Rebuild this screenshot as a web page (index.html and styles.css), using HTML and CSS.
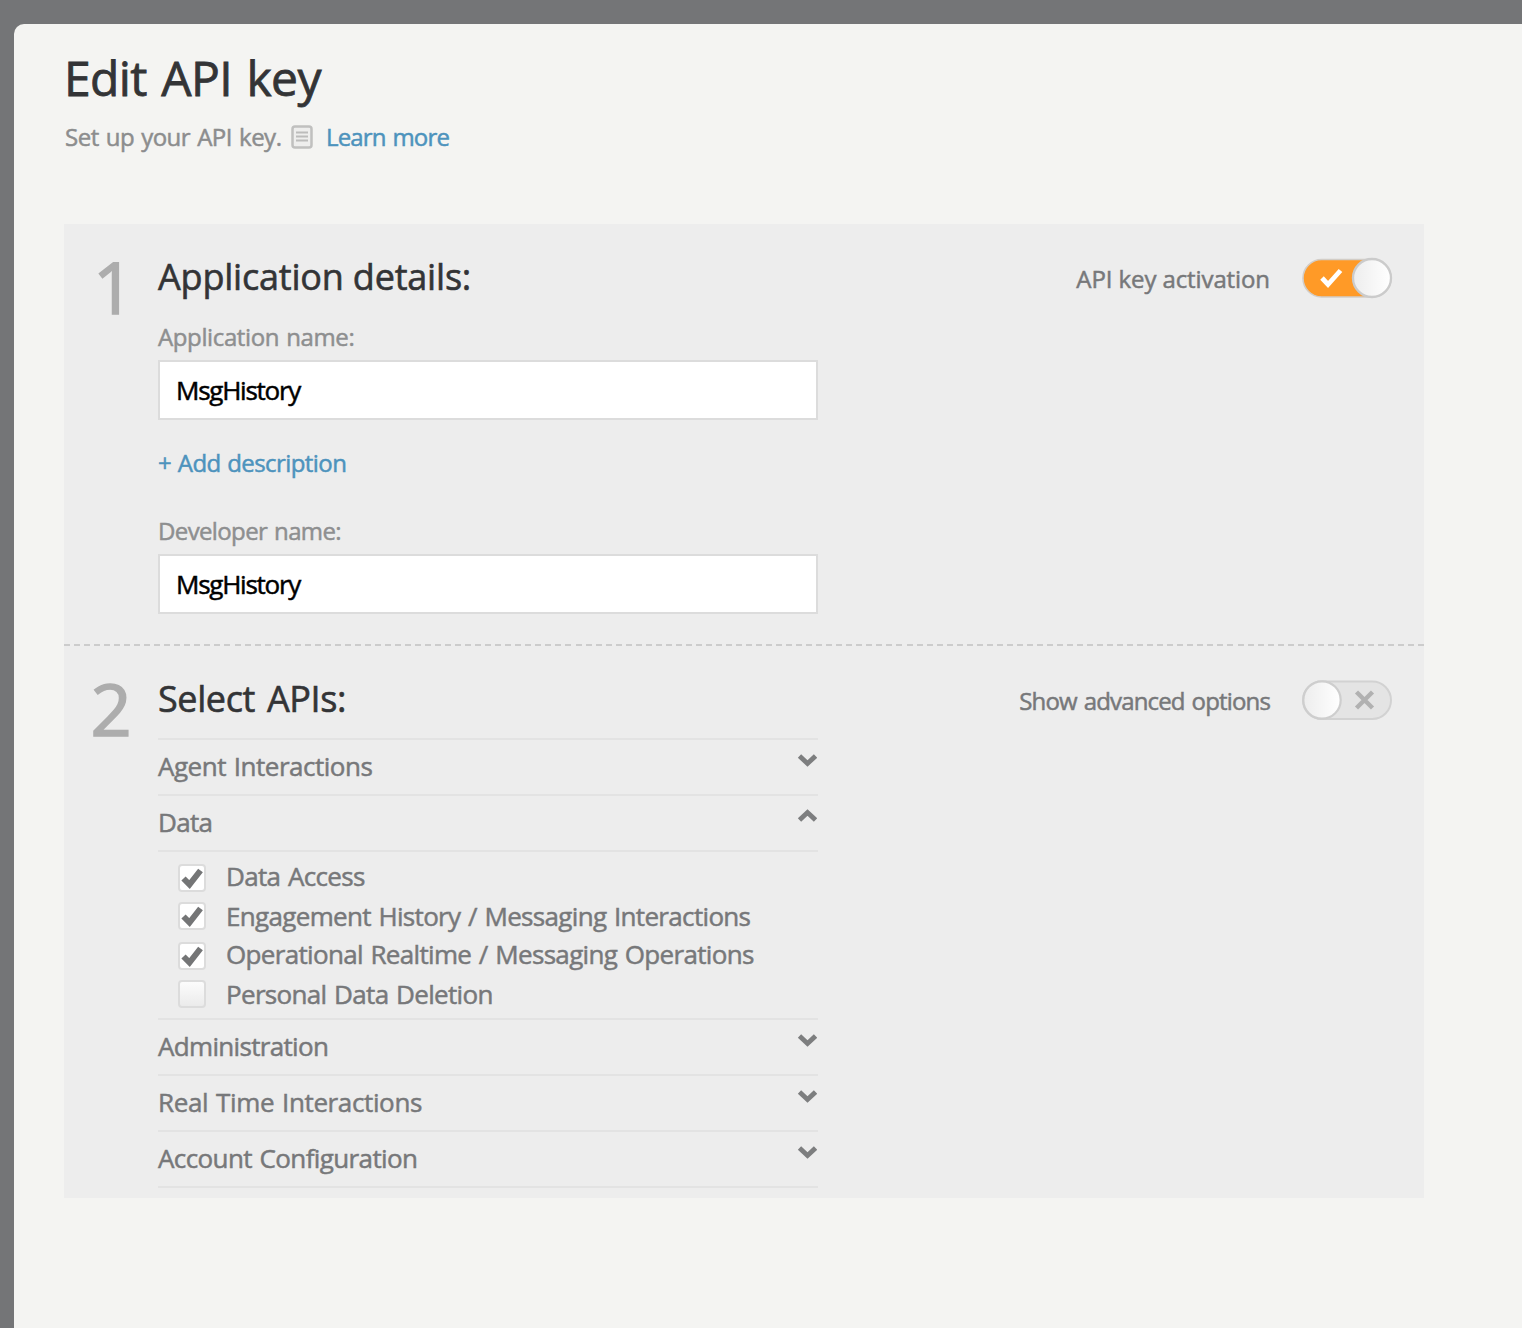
FILE: index.html
```html
<!DOCTYPE html>
<html lang="en">
<head>
<meta charset="utf-8">
<title>Edit API key</title>
<link rel="stylesheet" href="styles.css">
</head>
<body>
<svg class="defs" width="0" height="0" aria-hidden="true">
  <symbol id="chevron" viewBox="0 0 20 14"><path d="M2.500 3l8 7.500 8-7.500" fill="none" stroke="#7d7e7f" stroke-width="4.800"/></symbol>
  <symbol id="check" viewBox="0 0 24 24"><path d="M3.500 12.500l6 6L20.500 4.500" fill="none" stroke="#747576" stroke-width="6"/></symbol>
</svg>
<main class="panel">
  <h1 class="title"><span>Edit API key</span></h1>
  <p class="subtitle">
    <span class="t-sub">Set up your API key.</span>
    <svg class="doc" width="22" height="24" viewBox="0 0 22 24"><rect x="1.500" y="1.500" width="19" height="21" rx="2.500" fill="#eeeeed" stroke="#c0c0bf" stroke-width="2.500"/><path d="M5 7.500h12M5 11.500h12M5 15.500h12" stroke="#bcbcbb" stroke-width="1.800"/></svg>
    <a class="link t-learn">Learn more</a>
  </p>
  <div class="steps">
    <section class="step step-details">
      <div class="number one">1</div>
      <div class="fields">
        <h2 class="heading">Application details:</h2>
        <label class="label t-appname">Application name:</label>
        <div class="input"><span>MsgHistory</span></div>
        <a class="link add">+ Add description</a>
        <label class="label dev">Developer name:</label>
        <div class="input"><span>MsgHistory</span></div>
      </div>
      <div class="option">
        <span class="option-text t-activation">API key activation</span>
        <svg class="toggle" width="92" height="42" viewBox="0 0 92 42">
          <defs><linearGradient id="knob"><stop offset="0" stop-color="#ededed"/><stop offset="1" stop-color="#fff"/></linearGradient></defs>
          <rect x="2" y="2.500" width="88" height="37.500" rx="18.700" fill="#ff9a27" stroke="#d2cdc7" stroke-width="1.600"/>
          <path d="M21 21l6 6.500L39.500 13.500" fill="none" stroke="#fff" stroke-width="4.800"/>
          <circle cx="71" cy="21" r="19" fill="url(#knob)" stroke="#cbcbcb" stroke-width="2.300"/>
        </svg>
      </div>
    </section>
    <section class="step step-apis">
      <div class="number">2</div>
      <div class="fields">
        <h2 class="heading t-select">Select APIs:</h2>
        <div class="list">
          <div class="group"><span class="t-agent">Agent Interactions</span><svg class="chev"><use href="#chevron"/></svg></div>
          <div class="group"><span>Data</span><svg class="chev up"><use href="#chevron"/></svg></div>
          <ul class="checks">
            <li><i class="box"><svg><use href="#check"/></svg></i><span>Data Access</span></li>
            <li><i class="box"><svg><use href="#check"/></svg></i><span>Engagement History / Messaging Interactions</span></li>
            <li><i class="box"><svg><use href="#check"/></svg></i><span>Operational Realtime / Messaging Operations</span></li>
            <li><i class="box empty"></i><span>Personal Data Deletion</span></li>
          </ul>
          <div class="group"><span>Administration</span><svg class="chev"><use href="#chevron"/></svg></div>
          <div class="group"><span class="t-rti">Real Time Interactions</span><svg class="chev"><use href="#chevron"/></svg></div>
          <div class="group"><span class="t-account">Account Configuration</span><svg class="chev"><use href="#chevron"/></svg></div>
        </div>
      </div>
      <div class="option">
        <span class="option-text t-advanced">Show advanced options</span>
        <svg class="toggle" width="92" height="42" viewBox="0 0 92 42">
          <rect x="2" y="2.500" width="88" height="37.500" rx="18.700" fill="#e4e4e4" stroke="#d2d2d2" stroke-width="2"/>
          <path d="M55.500 13l16 16M71.500 13L55.500 29" stroke="#b1b1b1" stroke-width="4.400"/>
          <circle cx="21" cy="21" r="18.700" fill="url(#knob)" stroke="#cecece" stroke-width="2.200"/>
        </svg>
      </div>
    </section>
  </div>
</main>
</body>
</html>
```
FILE: styles.css
```css
* { box-sizing: border-box; }
body {
  margin: 0;
  padding: 24px 0 0 14px;
  background: #747577;
  font-family: "Trebuchet MS", "Open Sans", sans-serif;
  font-size: 24px;
  line-height: 32px;
  color: #77787a;
  -webkit-text-stroke: 0.5px;
  overflow: hidden;
}
.defs { position: absolute; }
.panel {
  height: 1304px;
  padding: 26px 0 0 50px;
  background: #f4f4f2;
  border-top-left-radius: 10px;
}
.title {
  margin: 0 0 15px;
  font-size: 48px;
  line-height: 56px;
  font-weight: 400;
  letter-spacing: -0.6px;
  word-spacing: 2.5px;
  color: #333436;
  -webkit-text-stroke-width: 0.8px;
}
.subtitle {
  display: flex;
  align-items: flex-start;
  margin: 0 0 71px;
  padding-left: 1px;
  height: 32px;
  color: #8c8d8e;
}
.t-sub { width: 226px; white-space: nowrap; letter-spacing: -0.5px; word-spacing: 1.3px; }
.doc { margin: 4px 13px 0 0; }
.link { color: #4d93bd; }
.t-learn { letter-spacing: -0.85px; word-spacing: 1.5px; }
.steps { width: 1360px; background: #ededed; }
.step {
  display: grid;
  grid-template-columns: 94px 660px 1fr;
}
.step-details { height: 420px; }
.step-apis {
  padding-bottom: 10px;
  padding-top: 2px;
  background: repeating-linear-gradient(90deg, #ccc 0 6px, transparent 6px 10.03px) top / 100% 2px no-repeat;
}
.number {
  padding-top: 26px;
  text-align: center;
  font-size: 72px;
  line-height: 72px;
  color: #adadad;
  -webkit-text-stroke-width: 1.6px;
}
.number.one { padding-left: 5px; }
.fields { padding-top: 31px; display: flex; flex-direction: column; align-items: flex-start; }
.heading {
  margin: 0;
  font-size: 36px;
  line-height: 44px;
  font-weight: 400;
  letter-spacing: -0.2px;
  color: #333436;
  -webkit-text-stroke-width: 0.6px;
}
.t-select { letter-spacing: -0.4px; word-spacing: 3px; }
.label { margin: 22px 0 7px; color: #8e8f90; }
.t-appname { letter-spacing: -0.38px; word-spacing: 1.3px; }
.input {
  width: 660px;
  height: 60px;
  padding-left: 16px;
  border: 2px solid #dcdcdc;
  background: #fff;
  color: #000;
  font-size: 26px;
  line-height: 56px;
  letter-spacing: -1.25px;
}
.add { margin-top: 27px; letter-spacing: -0.58px; word-spacing: 1px; }
.label.dev { margin-top: 36px; letter-spacing: -0.63px; word-spacing: 1.3px; }
.option {
  display: flex;
  justify-content: flex-end;
  align-items: flex-start;
  padding-right: 31px;
}
.option-text { margin: 39px 31px 0 0; white-space: nowrap; }
.t-activation { letter-spacing: -0.1px; }
.t-advanced { letter-spacing: -0.84px; word-spacing: 1.5px; }
.toggle { margin-top: 33px; }
.list {
  width: 660px;
  margin-top: 17px;
  border-bottom: 2px solid #e3e3e3;
  font-size: 26px;
  letter-spacing: -0.67px;
  word-spacing: 1.5px;
}
.t-agent { letter-spacing: -0.48px; }
.t-rti { letter-spacing: -0.37px; }
.t-account { letter-spacing: -0.61px; }
.group {
  display: flex;
  justify-content: space-between;
  height: 56px;
  border-top: 2px solid #e3e3e3;
  line-height: 52px;
}
.chev { width: 20px; height: 14px; margin: 13px 1px 0 0; }
.chev.up { transform: scaleY(-1); }
.checks {
  height: 168px;
  margin: 0;
  padding: 6px 0 0 20px;
  border-top: 2px solid #e3e3e3;
  list-style: none;
  line-height: 36px;
}
.checks li { display: flex; height: 40px; gap: 20px; }
.checks li:nth-child(2) { height: 38px; }
.checks span { white-space: nowrap; }
.box {
  width: 28px;
  height: 28px;
  margin-top: 4px;
  border: 2px solid #dcdcdc;
  border-radius: 4px;
  background: #fff;
}
.box svg { display: block; width: 24px; height: 24px; }
.checks li:nth-child(odd) .box { margin-top: 6px; }
.box.empty { background: linear-gradient(#fcfcfc, #ebebeb); }
```
